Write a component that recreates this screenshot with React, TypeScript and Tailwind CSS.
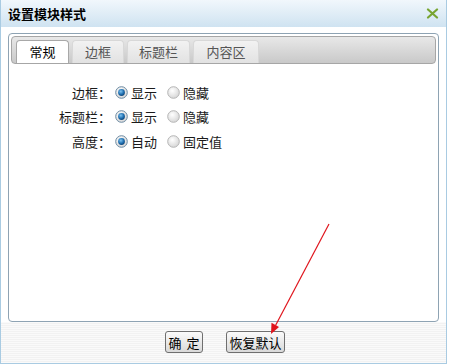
import React from "react";

const font = '"Noto Sans CJK SC", "Noto Sans", sans-serif';

function Radio({ checked }: { checked: boolean }) {
  return (
    <svg width="13" height="13" viewBox="0 0 13 13" className="shrink-0">
      <defs>
        <radialGradient id="rg" cx="40%" cy="35%" r="70%">
          <stop offset="0%" stopColor="#ffffff" />
          <stop offset="100%" stopColor="#d4d4d4" />
        </radialGradient>
        <radialGradient id="dot" cx="40%" cy="35%" r="70%">
          <stop offset="0%" stopColor="#7fc3f0" />
          <stop offset="60%" stopColor="#1f6fb0" />
          <stop offset="100%" stopColor="#0d3f70" />
        </radialGradient>
      </defs>
      <circle cx="6.5" cy="6.5" r="5.8" fill="url(#rg)" stroke={checked ? "#6d8ba3" : "#b5b5b5"} strokeWidth="1" />
      {checked && <circle cx="6.5" cy="6.5" r="3.4" fill="url(#dot)" />}
    </svg>
  );
}

function Row({ label, a, b }: { label: string; a: string; b: string }) {
  return (
    <div className="flex items-center h-[24.5px]">
      <div className="w-[100px] text-right [text-spacing-trim:space-all]">{label}</div>
      <div className="flex items-center gap-[3px] ml-[4px]">
        <Radio checked />
        <span>{a}</span>
      </div>
      <div className="flex items-center gap-[3px] ml-[10px]">
        <Radio checked={false} />
        <span>{b}</span>
      </div>
    </div>
  );
}

function Tab({ label, active, w }: { label: string; active?: boolean; w: string }) {
  return (
    <div
      className={
        "h-[23px] flex items-center justify-center rounded-t-[4px] border border-b-0 " +
        w +
        (active
          ? " bg-white border-[#a8a8a8] text-black"
          : " bg-gradient-to-b from-[#f2f2f2] to-[#e2e2e2] border-[#d8d8d8] text-[#555]")
      }
    >
      {label}
    </div>
  );
}

export default function App() {
  return (
    <div
      className="relative w-[450px] h-[364px] bg-white text-[13px] text-[#1a1a1a] overflow-hidden"
      style={{ fontFamily: font }}
    >
      <div className="w-[447px] h-[364px] border-x border-b border-[#a9cbe2] flex flex-col">
        <div className="h-[27px] shrink-0 bg-gradient-to-b from-[#f1f7fc] to-[#cfe3f1] flex items-center justify-between pl-[7px] pr-[7px]">
          <span className="font-bold text-[13px] text-black">设置模块样式</span>
          <svg width="13" height="11" viewBox="0 0 13 11">
            <path d="M2 1.5 L11 9.5 M11 1.5 L2 9.5" stroke="#78a532" strokeWidth="2.2" strokeLinecap="round" />
          </svg>
        </div>
        <div className="flex-1 flex flex-col">
          <div className="mt-[6px] mx-[7px] h-[289px] border border-[#8ea3b3] rounded-[4px] p-[2px] flex flex-col">
            <div className="h-[28px] rounded-[4px] border border-[#a6a6a6] bg-gradient-to-b from-[#e8e8e8] to-[#c9c9c9] flex items-end gap-[3px] pl-[4px]">
              <Tab label="常规" active w="w-[53px]" />
              <Tab label="边框" w="w-[52px]" />
              <Tab label="标题栏" w="w-[63px]" />
              <Tab label="内容区" w="w-[66px]" />
            </div>
            <div className="pt-[16px] flex flex-col">
              <Row label="边框：" a="显示" b="隐藏" />
              <Row label="标题栏：" a="显示" b="隐藏" />
              <Row label="高度：" a="自动" b="固定值" />
            </div>
          </div>
          <div className="flex-1 bg-[repeating-linear-gradient(to_bottom,#fafafa_0px,#fafafa_1px,#f2f2f2_1px,#f2f2f2_2px)] flex justify-center items-start pt-[9px] gap-[23px] pl-[3px]">
            <button className="h-[22px] w-[38px] rounded-[3px] border border-[#6f6f6f] bg-gradient-to-b from-[#fbfbfb] to-[#d9d9d9] text-black text-[13px] leading-none whitespace-pre [word-spacing:2px]">
              {"确 定"}
            </button>
            <button className="h-[22px] w-[59px] rounded-[3px] border border-[#6f6f6f] bg-gradient-to-b from-[#fbfbfb] to-[#d9d9d9] text-black text-[13px] leading-none">
              恢复默认
            </button>
          </div>
        </div>
      </div>
      <svg className="absolute left-0 top-0 pointer-events-none" width="450" height="364">
        <line x1="329" y1="224" x2="275.5" y2="325.5" stroke="#e0141c" strokeWidth="1.2" />
        <polygon points="271,334 271.5,322.8 279,327" fill="#e0141c" />
      </svg>
    </div>
  );
}
